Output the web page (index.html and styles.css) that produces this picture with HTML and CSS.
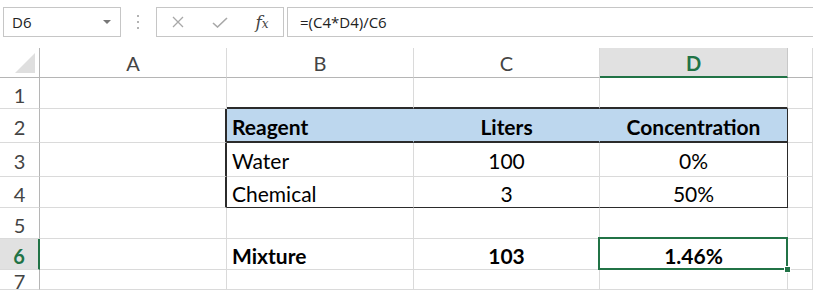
FILE: index.html
```html
<!DOCTYPE html>
<html>
<head>
<meta charset="utf-8">
<link rel="stylesheet" href="styles.css">
</head>
<body>
<div class="formula-bar">
  <div class="name-box"><span>D6</span><span class="caret"></span></div>
  <div class="grip">
    <svg width="4" height="16" viewBox="0 0 4 16"><circle cx="2" cy="2" r="1" fill="#9a9a9a"/><circle cx="2" cy="8" r="1" fill="#9a9a9a"/><circle cx="2" cy="14" r="1" fill="#9a9a9a"/></svg>
  </div>
  <div class="fx-box">
    <span class="fx-slot"><svg width="12" height="12" viewBox="0 0 12 12"><path d="M1 1 L11 11 M11 1 L1 11" stroke="#a8a8a8" stroke-width="1.3" fill="none"/></svg></span>
    <span class="fx-slot"><svg width="16" height="11" viewBox="0 0 16 11"><path d="M1 6 L5.5 10 L15 1" stroke="#a8a8a8" stroke-width="1.6" fill="none"/></svg></span>
    <span class="fx-slot fx"><i>f</i><span class="fx-x">x</span></span>
  </div>
  <div class="formula-input">=(C4*D4)/C6</div>
</div>

<div class="sheet">
  <div class="corner"><span class="tri"></span></div>
  <div class="ch">A</div>
  <div class="ch">B</div>
  <div class="ch">C</div>
  <div class="ch ch-sel">D</div>
  <div class="ch ch-last"></div>

  <div class="rh">1</div>
  <div class="c"></div>
  <div class="c t-top"></div>
  <div class="c t-top"></div>
  <div class="c t-top"></div>
  <div class="c"></div>

  <div class="rh">2</div>
  <div class="c t-left"></div>
  <div class="c hd left">Reagent</div>
  <div class="c hd">Liters</div>
  <div class="c hd t-right">Concentration</div>
  <div class="c"></div>

  <div class="rh">3</div>
  <div class="c t-left"></div>
  <div class="c left">Water</div>
  <div class="c">100</div>
  <div class="c t-right">0%</div>
  <div class="c"></div>

  <div class="rh">4</div>
  <div class="c t-left"></div>
  <div class="c left t-bot">Chemical</div>
  <div class="c t-bot">3</div>
  <div class="c t-right t-bot">50%</div>
  <div class="c"></div>

  <div class="rh">5</div>
  <div class="c"></div>
  <div class="c"></div>
  <div class="c"></div>
  <div class="c"></div>
  <div class="c"></div>

  <div class="rh rh-sel">6</div>
  <div class="c"></div>
  <div class="c left b">Mixture</div>
  <div class="c b">103</div>
  <div class="c b active">1.46%<span class="handle"></span></div>
  <div class="c"></div>

  <div class="rh">7</div>
  <div class="c"></div>
  <div class="c"></div>
  <div class="c"></div>
  <div class="c"></div>
  <div class="c"></div>
</div>
</body>
</html>
```

FILE: styles.css
```css
* { box-sizing: border-box; }

body {
  margin: 0;
  width: 813px;
  height: 290px;
  overflow: hidden;
  background: #fff;
  font-family: Lato, "Open Sans", sans-serif;
  color: #000;
}

/* formula bar */
.formula-bar {
  display: flex;
  align-items: center;
  height: 30px;
  margin: 7px 0 0 3px;
  font-family: "Open Sans", sans-serif;
  font-size: 15px;
  color: #222;
}
.name-box {
  width: 118px;
  height: 30px;
  border: 1px solid #c6c6c6;
  display: flex;
  align-items: center;
  justify-content: space-between;
  padding: 0 9px 0 8px;
}
.caret {
  width: 0;
  height: 0;
  border-left: 4px solid transparent;
  border-right: 4px solid transparent;
  border-top: 4px solid #777;
}
.grip {
  width: 35px;
  display: flex;
  justify-content: center;
  padding-right: 1px;
}
.grip svg { display: block; }
.fx-box {
  width: 128px;
  height: 30px;
  border: 1px solid #c6c6c6;
  display: flex;
  align-items: center;
}
.fx-slot {
  width: 42px;
  display: flex;
  justify-content: center;
  align-items: center;
}
.fx-slot svg { display: block; }
.fx {
  font-family: "DejaVu Serif", serif;
  color: #444;
  font-size: 17px;
  font-style: italic;
  font-weight: normal;
}
.fx i { font-weight: normal; }
.fx-x { font-size: 12px; position: relative; top: 2px; }
.formula-input {
  flex: 1;
  height: 30px;
  margin-left: 3px;
  border: 1px solid #c6c6c6;
  border-right: none;
  padding-left: 12px;
  display: flex;
  align-items: center;
}

/* sheet grid */
.sheet {
  margin-top: 11px;
  display: grid;
  grid-template-columns: 40px 187px 187px 186px 188px 1fr;
  grid-template-rows: 30px 31px 34px 34px 31px 31px 31px 20px;
  font-size: 21px;
}
.sheet > div {
  border-right: 1px solid #dadada;
  border-bottom: 1px solid #dadada;
  display: flex;
  align-items: center;
  justify-content: center;
  white-space: nowrap;
}
.corner {
  position: relative;
  border-right-color: #b5b5b5 !important;
  border-bottom-color: #b5b5b5 !important;
}
.tri {
  position: absolute;
  right: 4px;
  bottom: 4px;
  width: 0;
  height: 0;
  border-left: 20px solid transparent;
  border-bottom: 20px solid #dfdfdf;
}
.ch {
  color: #444;
  font-size: 20px;
  border-bottom-color: #b5b5b5 !important;
  padding-top: 1px;
}
.ch-sel {
  background: #e1e1e1;
  color: #217346;
  font-weight: bold;
  border-bottom: 2px solid #217346 !important;
  border-right-color: #c8c8c8 !important;
}
.rh {
  color: #444;
  font-size: 20px;
  border-right-color: #b5b5b5 !important;
  padding-top: 3px;
}
.rh-sel {
  background: #e1e1e1;
  color: #217346;
  font-weight: bold;
  border-right: 2px solid #217346 !important;
}
.c { padding-top: 2px; }
.left { justify-content: flex-start !important; padding-left: 5px; }
.hd { background: #bdd7ee; font-weight: bold; border-bottom: 2px solid #2b2b2b !important; border-right-color: #bdd7ee !important; }
.t-top { border-bottom: 2px solid #2b2b2b !important; }
.t-left { border-right: 2px solid #2b2b2b !important; }
.t-right { border-right: 1px solid #2b2b2b !important; }
.t-bot { border-bottom: 1px solid #2b2b2b !important; }
.b { font-weight: bold; }
.active { position: relative; }
.active::before {
  content: "";
  position: absolute;
  left: -2px;
  top: -2px;
  right: -1px;
  bottom: -1px;
  border: 2px solid #217346;
}
.handle {
  position: absolute;
  right: -4px;
  bottom: -4px;
  width: 7px;
  height: 7px;
  background: #217346;
  border: 1px solid #fff;
}
```
